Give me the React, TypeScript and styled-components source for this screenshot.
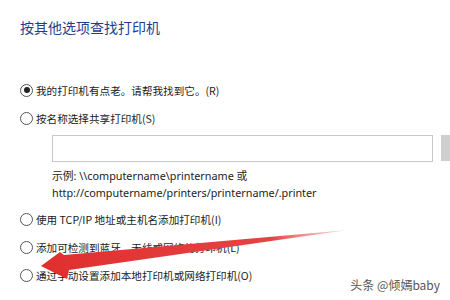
import React from 'react';
import styled, { createGlobalStyle } from 'styled-components';

const GlobalStyle = createGlobalStyle`
  html, body {
    margin: 0;
    padding: 0;
    background: #ffffff;
  }
  body {
    width: 450px;
    height: 300px;
    overflow: hidden;
    font-family: "Noto Sans", "Noto Sans CJK SC", sans-serif;
  }
`;

const Page = styled.div`
  position: relative;
  width: 450px;
  height: 300px;
  overflow: hidden;
  box-sizing: border-box;
  padding: 17px 0 0 20px;
  display: flex;
  flex-direction: column;
`;

const Title = styled.div`
  font-family: "Noto Sans CJK SC", sans-serif;
  font-size: 14px;
  line-height: 20px;
  color: #1f3f8c;
  margin-bottom: 45px;
`;

const Option = styled.label<{ $gap?: number }>`
  display: flex;
  align-items: center;
  height: 16px;
  margin-bottom: ${(p) => p.$gap ?? 12}px;
  font-family: "Noto Sans CJK SC", sans-serif;
  font-size: 10.6px;
  color: #1a1a1a;
  white-space: nowrap;
`;

const Radio = styled.span<{ $checked?: boolean }>`
  position: relative;
  width: 11px;
  height: 11px;
  border: 1px solid #555;
  border-radius: 50%;
  margin-right: 3px;
  flex-shrink: 0;

  &::after {
    content: '';
    display: ${(p) => (p.$checked ? 'block' : 'none')};
    position: absolute;
    left: 2.5px;
    top: 2.5px;
    width: 6px;
    height: 6px;
    border-radius: 50%;
    background: #222;
  }
`;

const InputRow = styled.div`
  display: flex;
  gap: 8px;
  margin-left: 32px;
  margin-top: -3px;
`;

const TextBox = styled.div`
  width: 381px;
  height: 27px;
  box-sizing: border-box;
  border: 1px solid #c8c8c8;
  background: #fff;
  flex-shrink: 0;
`;

const BrowseButton = styled.div`
  width: 40px;
  height: 26px;
  background: #cfcfcf;
  flex-shrink: 0;
`;

const Example = styled.div`
  margin: 5px 0 10px 32px;
  font-family: "Noto Sans", "Noto Sans CJK SC", sans-serif;
  font-size: 10.8px;
  line-height: 17px;
  color: #222;
  white-space: nowrap;
`;

const Watermark = styled.div`
  position: absolute;
  right: 10px;
  bottom: 7px;
  font-family: "Noto Sans CJK SC", sans-serif;
  font-size: 12px;
  color: #555;
`;

const ArrowLayer = styled.svg`
  position: absolute;
  left: 0;
  top: 0;
  pointer-events: none;
`;

const options = [
  '使用 TCP/IP 地址或主机名添加打印机(I)',
  '添加可检测到蓝牙、无线或网络的打印机(L)',
  '通过手动设置添加本地打印机或网络打印机(O)',
];

const App: React.FC = () => (
  <>
    <GlobalStyle />
    <Page>
      <Title>按其他选项查找打印机</Title>
      <Option>
        <Radio $checked />
        我的打印机有点老。请帮我找到它。(R)
      </Option>
      <Option>
        <Radio />
        按名称选择共享打印机(S)
      </Option>
      <InputRow>
        <TextBox />
        <BrowseButton />
      </InputRow>
      <Example>
        示例: \\computername\printername 或
        <br />
        http://computername/printers/printername/.printer
      </Example>
      {options.map((text) => (
        <Option key={text}>
          <Radio />
          {text}
        </Option>
      ))}
      <Watermark>头条 @倾嫣baby</Watermark>
      <ArrowLayer width="450" height="300" viewBox="0 0 450 300">
        <defs>
          <linearGradient id="arrowFade" x1="40" y1="0" x2="350" y2="0" gradientUnits="userSpaceOnUse">
            <stop offset="0" stopColor="#e02e2e" />
            <stop offset="0.75" stopColor="#e44444" />
            <stop offset="1" stopColor="#f2a0a0" stopOpacity="0.35" />
          </linearGradient>
        </defs>
        <polygon
          points="41,266 60,252 64,255 348,230 69,270 67,279"
          fill="url(#arrowFade)"
        />
      </ArrowLayer>
    </Page>
  </>
);

export default App;
